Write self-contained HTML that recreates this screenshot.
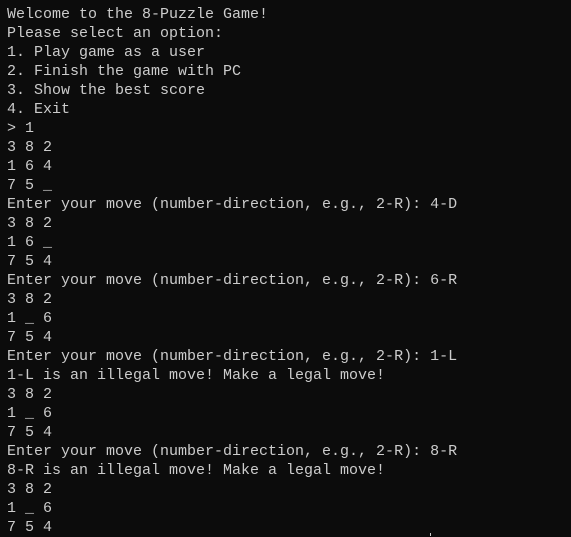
<!DOCTYPE html>
<html><head><meta charset="utf-8"><style>
html,body{margin:0;padding:0;background:#0c0c0c;width:571px;height:536px;overflow:hidden}
pre{margin:0;position:absolute;left:7px;top:5px;font-family:"Liberation Mono","DejaVu Sans Mono",monospace;font-size:15px;line-height:19px;color:#cccccc}
.t{position:absolute;left:430px;top:533px;width:1px;height:3px;background:#cccccc}
</style></head><body><pre>Welcome to the 8-Puzzle Game!
Please select an option:
1. Play game as a user
2. Finish the game with PC
3. Show the best score
4. Exit
&gt; 1
3 8 2
1 6 4
7 5 _
Enter your move (number-direction, e.g., 2-R): 4-D
3 8 2
1 6 _
7 5 4
Enter your move (number-direction, e.g., 2-R): 6-R
3 8 2
1 _ 6
7 5 4
Enter your move (number-direction, e.g., 2-R): 1-L
1-L is an illegal move! Make a legal move!
3 8 2
1 _ 6
7 5 4
Enter your move (number-direction, e.g., 2-R): 8-R
8-R is an illegal move! Make a legal move!
3 8 2
1 _ 6
7 5 4</pre><div class="t"></div></body></html>
